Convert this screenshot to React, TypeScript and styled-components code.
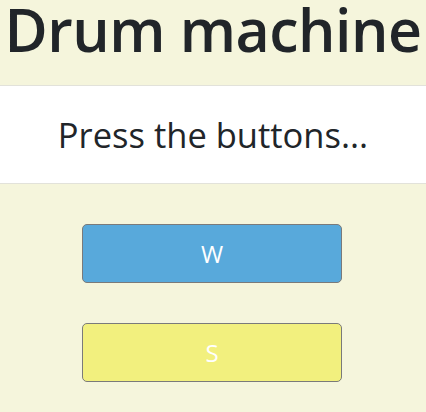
import React from "react";
import styled, { createGlobalStyle } from "styled-components";

const Global = createGlobalStyle`
  html, body { margin: 0; padding: 0; background: #f5f5dc; }
  body { font-family: "Open Sans", "Noto Sans", sans-serif; color: #212529; }
`;

const Page = styled.div`
  display: flex;
  flex-direction: column;
  align-items: stretch;
  min-height: 412px;
  background: #f5f5dc;
`;

const Title = styled.h1`
  margin: 0;
  height: 85px;
  text-align: center;
  font-size: 59px;
  font-weight: 600;
  line-height: 59px;
  letter-spacing: -0.5px;
  white-space: nowrap;
`;

const Banner = styled.div`
  background: #ffffff;
  border-top: 1px solid #e2e2da;
  border-bottom: 1px solid #e2e2da;
  height: 97px;
  display: flex;
  align-items: center;
  justify-content: center;
  font-size: 34.5px;
  font-weight: 400;
`;

const Pads = styled.div`
  display: flex;
  flex-direction: column;
  align-items: center;
  gap: 40px;
  padding-top: 40px;
  padding-right: 2px;
`;

const Pad = styled.button<{ $color: string }>`
  width: 260px;
  height: 59px;
  background: ${(p) => p.$color};
  border: 1px solid #7a7a7a;
  border-radius: 5px;
  color: #ffffff;
  font-family: "Open Sans", "Noto Sans", sans-serif;
  font-size: 24px;
  display: flex;
  align-items: center;
  justify-content: center;
  padding: 0;
`;

export default function App() {
  return (
    <Page>
      <Global />
      <Title>Drum machine</Title>
      <Banner>Press the buttons...</Banner>
      <Pads>
        <Pad $color="#58a9db">W</Pad>
        <Pad $color="#f2f07e">S</Pad>
      </Pads>
    </Page>
  );
}
